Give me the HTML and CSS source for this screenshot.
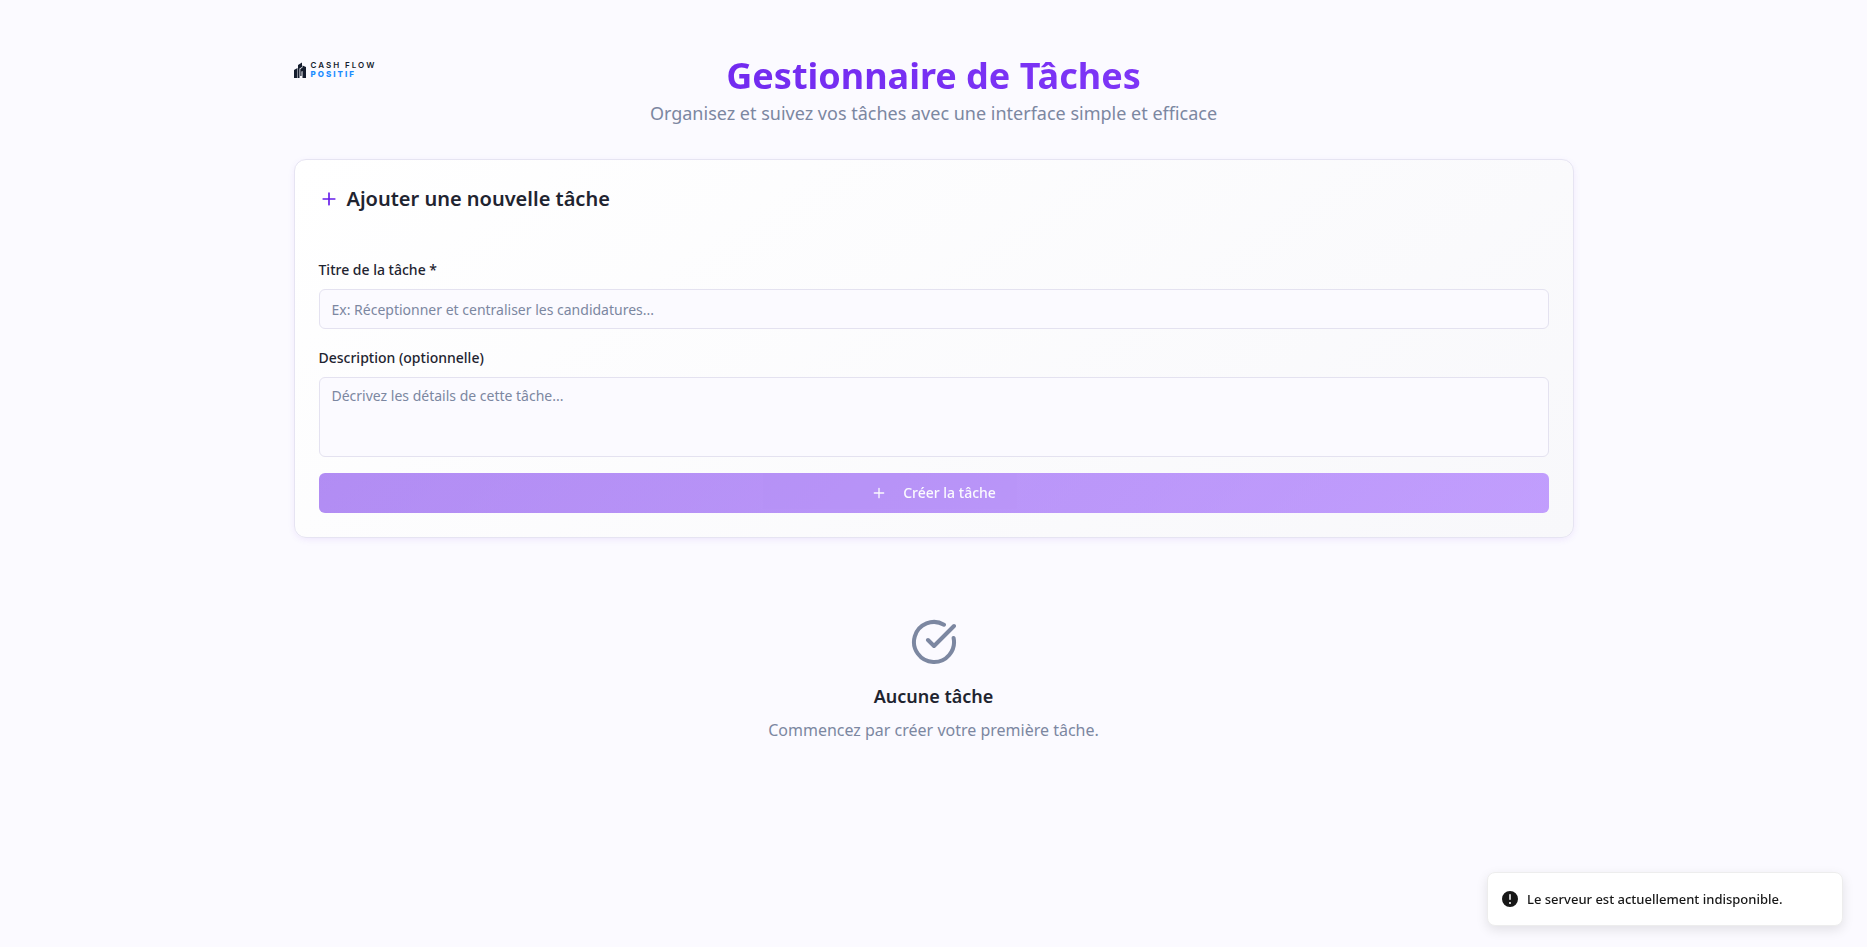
FILE: index.html
```html
<!DOCTYPE html>
<html lang="fr">
<head>
<meta charset="utf-8">
<title>Gestionnaire de Tâches</title>
<link rel="stylesheet" href="styles.css">
</head>
<body>
<main class="page">
  <header class="header">
    <div class="logo">
      <svg class="logo-mark" viewBox="0 0 12 16" aria-hidden="true">
        <path d="M0 8 3.500 6v10H0zM4 3 8 .5V5L5.500 6.500V16H4zM6.300 7 8.500 5.500V3.500L12 5v11H8.500V9L7.500 9.500V14H6.300z" fill="#141c2e"/>
      </svg>
      <div class="logo-text"><span>CASH FLOW</span><span class="logo-accent">POSITIF</span></div>
    </div>
    <div class="heading">
      <h1 class="title">Gestionnaire de Tâches</h1>
      <p class="subtitle">Organisez et suivez vos tâches avec une interface simple et efficace</p>
    </div>
  </header>

  <section class="card">
    <h2 class="card-title">
      <svg class="icon-md" viewBox="0 0 24 24" aria-hidden="true"><path d="M5 12h14M12 5v14"/></svg>
      Ajouter une nouvelle tâche
    </h2>
    <form class="form">
      <div class="field">
        <label class="label" for="titre">Titre de la tâche *</label>
        <input class="control" id="titre" type="text" placeholder="Ex: Réceptionner et centraliser les candidatures...">
      </div>
      <div class="field">
        <label class="label" for="description">Description (optionnelle)</label>
        <textarea class="control area" id="description" placeholder="Décrivez les détails de cette tâche..."></textarea>
      </div>
      <button class="submit" type="submit" disabled>
        <svg class="icon-sm" viewBox="0 0 24 24" aria-hidden="true"><path d="M5 12h14M12 5v14"/></svg>
        Créer la tâche
      </button>
    </form>
  </section>

  <section class="empty">
    <svg class="icon-lg" viewBox="0 0 24 24" aria-hidden="true"><path d="M21.801 10A10 10 0 1 1 17 3.335M9 11l3 3L22 4"/></svg>
    <h3 class="empty-title">Aucune tâche</h3>
    <p class="empty-text">Commencez par créer votre première tâche.</p>
  </section>
</main>

<div class="toast" role="status">
  <svg class="toast-icon" viewBox="0 0 20 20" aria-hidden="true"><path fill-rule="evenodd" d="M18 10a8 8 0 1 1-16 0 8 8 0 0 1 16 0zm-8-5a.75.75 0 0 1 .75.75v4.5a.75.75 0 0 1-1.5 0v-4.5A.75.75 0 0 1 10 5zm0 10a1 1 0 1 0 0-2 1 1 0 0 0 0 2z" clip-rule="evenodd"/></svg>
  <span>Le serveur est actuellement indisponible.</span>
</div>
</body>
</html>
```

FILE: styles.css
```css
* { box-sizing: border-box; margin: 0; }

body {
  min-height: 100vh;
  background: #fbfaff;
  color: #1f2430;
  font-family: "Noto Sans", sans-serif;
  font-size: 16px;
  line-height: 24px;
}

.page {
  max-width: 1344px;
  margin: 0 auto;
  padding: 56px 32px 32px;
}

.header {
  display: grid;
  grid-template-columns: 1fr auto 1fr;
  align-items: start;
  margin-bottom: 32px;
}

.logo {
  display: flex;
  align-items: center;
  gap: 5px;
  padding-top: 5px;
}

.logo-mark { width: 12px; height: 16px; }

.logo-text {
  display: flex;
  flex-direction: column;
  color: #141c2e;
  font-family: Inter, sans-serif;
  font-size: 8px;
  font-weight: 600;
  line-height: 9px;
  letter-spacing: 2px;
}

.logo-accent { color: #1a8cff; font-weight: 800; }

.heading { text-align: center; }

.title {
  background: linear-gradient(135deg, #7028ee, #8038f8);
  background-clip: text;
  -webkit-background-clip: text;
  color: transparent;
  font-size: 36px;
  font-weight: 700;
  line-height: 40px;
}

.subtitle {
  margin-top: 3px;
  color: #7c87a1;
  font-size: 18px;
  line-height: 28px;
}

.card {
  padding: 24px;
  border: 1px solid #e6e4f2;
  border-radius: 12px;
  background: linear-gradient(145deg, #ffffff, #f8f8fb);
  box-shadow: 0 2px 8px -2px rgba(102, 28, 233, 0.12);
}

.card-title {
  display: flex;
  align-items: center;
  gap: 8px;
  font-size: 20px;
  font-weight: 600;
  line-height: 30px;
}

.icon-sm, .icon-md, .icon-lg {
  fill: none;
  stroke: currentColor;
  stroke-width: 2;
  stroke-linecap: round;
  stroke-linejoin: round;
}

.icon-sm { width: 16px; height: 16px; }
.icon-md { width: 20px; height: 20px; color: #661ce9; }
.icon-lg { width: 48px; height: 48px; color: #7c87a1; }

.form {
  display: flex;
  flex-direction: column;
  gap: 16px;
  margin-top: 43px;
}

.field {
  display: flex;
  flex-direction: column;
  gap: 6px;
}

.label {
  font-size: 14px;
  font-weight: 500;
  line-height: 26px;
}

.control {
  width: 100%;
  height: 40px;
  padding: 8px 12px;
  border: 1px solid #e4e2f0;
  border-radius: 6px;
  background: #fbfaff;
  color: inherit;
  font-family: inherit;
  font-size: 14px;
  line-height: 20px;
}

.control::placeholder { color: #7c87a1; opacity: 1; }

.area { display: block; height: 80px; resize: none; }

.submit {
  display: flex;
  align-items: center;
  justify-content: center;
  gap: 16px;
  height: 40px;
  border: 0;
  border-radius: 6px;
  background: linear-gradient(135deg, #661ce9, #8a43ff);
  color: #fbfaff;
  font-family: inherit;
  font-size: 14px;
  font-weight: 500;
  line-height: 20px;
  opacity: 0.5;
}

.empty {
  display: flex;
  flex-direction: column;
  align-items: center;
  padding: 80px 0 48px;
}

.empty-title {
  margin-top: 16px;
  font-size: 18px;
  font-weight: 600;
  line-height: 28px;
}

.empty-text { margin-top: 8px; color: #7c87a1; }

.toast {
  position: fixed;
  right: 24px;
  bottom: 21px;
  display: flex;
  align-items: center;
  gap: 7px;
  width: 356px;
  padding: 16px 12px;
  border: 1px solid #ededed;
  border-radius: 8px;
  background: #ffffff;
  box-shadow: 0 4px 12px rgba(0, 0, 0, 0.1);
  color: #171717;
  font-size: 13px;
  font-weight: 500;
  line-height: 20px;
}

.toast-icon { width: 20px; height: 20px; fill: #171717; }
```
